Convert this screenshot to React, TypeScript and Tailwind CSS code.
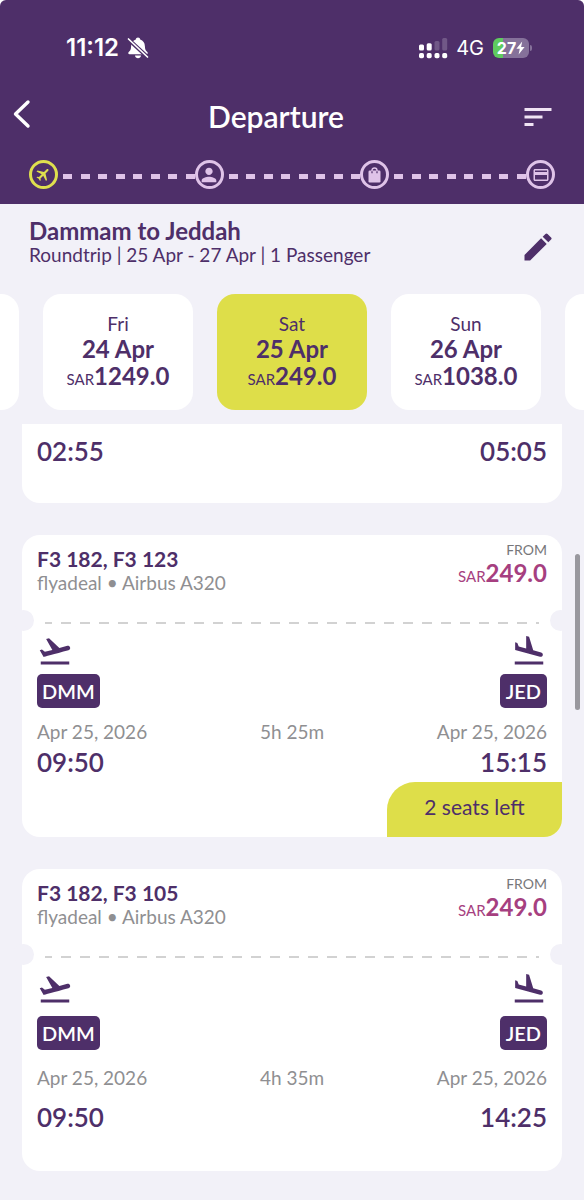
import React from "react";
import {
  MdCreditCard,
  MdEdit,
  MdFlight,
  MdFlightLand,
  MdFlightTakeoff,
  MdPerson,
  MdSort,
} from "react-icons/md";

type Flight = {
  numbers: string;
  carrier: string;
  price: string;
  duration: string;
  departs: string;
  arrives: string;
  seats?: string;
};

const flights: Flight[] = [
  {
    numbers: "F3 182, F3 123",
    carrier: "flyadeal • Airbus A320",
    price: "249.0",
    duration: "5h 25m",
    departs: "09:50",
    arrives: "15:15",
    seats: "2 seats left",
  },
  {
    numbers: "F3 182, F3 105",
    carrier: "flyadeal • Airbus A320",
    price: "249.0",
    duration: "4h 35m",
    departs: "09:50",
    arrives: "14:25",
  },
];

const days = [
  { day: "Fri", date: "24 Apr", price: "1249.0", selected: false },
  { day: "Sat", date: "25 Apr", price: "249.0", selected: true },
  { day: "Sun", date: "26 Apr", price: "1038.0", selected: false },
];

function StatusBar() {
  return (
    <div className="flex h-[32px] items-center justify-between pr-[52px] pl-[66px] font-['Inter',sans-serif]">
      <div className="flex items-center gap-2">
        <span className="text-[24px] leading-[30px] font-semibold">11:12</span>
        <svg width="22" height="22" viewBox="0 0 22 22" aria-label="Silent">
          <path
            d="M11 0.600C9.800 0.600 8.900 1.400 8.800 2.500C5.900 3.400 4.200 5.800 4.100 9.200C4 12.600 3.200 13.600 1.700 15C0.900 15.800 1.200 17.300 2.600 17.300H19.400C20.800 17.300 21.100 15.800 20.300 15C18.800 13.600 18 12.600 17.900 9.200C17.800 5.800 16.100 3.400 13.200 2.500C13.100 1.400 12.200 0.600 11 0.600Z"
            fill="#fff"
          />
          <path d="M8 18.500H14C13.800 20.200 12.600 21.200 11 21.200C9.400 21.200 8.200 20.200 8 18.500Z" fill="#fff" />
          <path d="M1 2L20.500 20" stroke="#4e2f69" strokeWidth="3.800" />
          <path d="M1.500 2L20.500 20" stroke="#fff" strokeWidth="1.700" strokeLinecap="round" />
        </svg>
      </div>
      <div className="flex items-center">
        <svg width="29" height="21" viewBox="0 0 29 21" fill="#fff" aria-label="Signal">
          <rect x="0" y="6.500" width="5" height="6" rx="1.500" />
          <rect x="7.700" y="5.200" width="5" height="7.300" rx="1.500" />
          <rect x="15.500" y="3" width="5" height="9.500" rx="1.500" opacity="0.200" />
          <rect x="23.200" y="0" width="5" height="12.500" rx="1.500" opacity="0.200" />
          <rect x="0" y="15" width="5" height="5.300" rx="1.700" />
          <rect x="7.700" y="15" width="5" height="5.300" rx="1.700" />
          <rect x="15.500" y="15" width="5" height="5.300" rx="1.700" />
          <rect x="23.200" y="15" width="5" height="5.300" rx="1.700" />
        </svg>
        <span className="ml-2 text-[20px] leading-[30px]">4G</span>
        <div className="ml-[9px] flex h-5 w-9 items-center justify-center rounded-[6px] bg-[linear-gradient(90deg,#5fcb5f_10px,#85719a_10px)]">
          <span className="text-[16px] leading-5 font-bold">27</span>
          <svg width="9" height="14" viewBox="0 0 9 14" fill="#fff" aria-hidden="true">
            <path d="M6.200 0.500L0.400 7.800H3.800L2.600 13.500L8.600 5.900H5.100Z" />
          </svg>
        </div>
        <span className="ml-px h-[6px] w-[2px] rounded-r-full bg-[#85719a]" />
      </div>
    </div>
  );
}

function Dashes() {
  return (
    <div className="ml-[5px] flex flex-1 justify-between pt-[3px]" aria-hidden="true">
      {Array.from({ length: 8 }, (_, i) => (
        <span key={i} className="h-[5px] w-[9px] bg-[#dfc3e8]" />
      ))}
    </div>
  );
}

function Step({ active, label, children }: { active?: boolean; label: string; children: React.ReactNode }) {
  return (
    <span
      role="img"
      aria-label={label}
      className={`flex size-[29px] items-center justify-center rounded-full border-[3px] ${
        active ? "border-[#dfdf4e] text-[#dfdf4e]" : "border-[#dfc3e8] text-[#dfc3e8]"
      }`}
    >
      {children}
    </span>
  );
}

function BagIcon() {
  return (
    <svg width="13" height="16" viewBox="0 0 13 16" aria-hidden="true">
      <rect x="0.500" y="3.500" width="12" height="12" rx="1.200" fill="currentColor" />
      <path d="M4 4V3.300C4 1.900 5 1 6.500 1S9 1.900 9 3.300V4" fill="none" stroke="currentColor" strokeWidth="1.400" />
      <path d="M4 4.300V6.300M9 4.300V6.300" stroke="#4e2f69" strokeWidth="1.200" />
    </svg>
  );
}

function Header() {
  return (
    <header className="h-[204px] rounded-t-[6px] bg-[#4e2f69] pt-8 text-white">
      <StatusBar />
      <div className="mt-[27px] grid h-[52px] grid-cols-[1fr_auto_1fr] items-center pr-[28px] pl-[12px]">
        <button type="button" aria-label="Back" className="justify-self-start pb-[6px]">
          <svg width="20" height="30" viewBox="0 0 20 30" fill="none" aria-hidden="true">
            <path d="M16 3L3.500 15L16 27" stroke="#fff" strokeWidth="3.400" strokeLinecap="round" strokeLinejoin="round" />
          </svg>
        </button>
        <h1 className="pr-4 pb-[2px] text-[30px] leading-9 font-semibold">Departure</h1>
        <button type="button" aria-label="Sort" className="justify-self-end text-[#f0e4f4]">
          <MdSort size={36} />
        </button>
      </div>
      <div className="mt-[17px] flex items-center px-[29px]">
        <Step active label="Flight">
          <MdFlight size={17} className="rotate-45" />
        </Step>
        <Dashes />
        <Step label="Passengers">
          <MdPerson size={22} />
        </Step>
        <Dashes />
        <Step label="Extras">
          <BagIcon />
        </Step>
        <Dashes />
        <Step label="Payment">
          <MdCreditCard size={18} />
        </Step>
      </div>
    </header>
  );
}

function Price({ amount }: { amount: string }) {
  return (
    <span className="flex items-baseline">
      <span className="text-[15px] leading-6 font-normal">SAR</span>
      <span className="text-[24px] leading-6 font-bold">{amount}</span>
    </span>
  );
}

function Days() {
  return (
    <div className="flex justify-center gap-6 overflow-hidden">
      <span className="h-[116px] w-[150px] shrink-0 rounded-[18px] bg-white" />
      {days.map((d) => (
        <button
          type="button"
          key={d.date}
          aria-pressed={d.selected}
          className={`flex h-[116px] w-[150px] shrink-0 flex-col items-center rounded-[18px] pt-[18px] ${
            d.selected ? "bg-[#dede49]" : "bg-white"
          }`}
        >
          <span className="text-[19px] leading-6">{d.day}</span>
          <span className="mb-[2px] text-[24px] leading-[26px] font-bold">{d.date}</span>
          <Price amount={d.price} />
        </button>
      ))}
      <span className="h-[116px] w-[150px] shrink-0 rounded-[18px] bg-white" />
    </div>
  );
}

function Times({ departs, arrives }: { departs: string; arrives: string }) {
  return (
    <div className="flex justify-between px-[15px] text-[26px] leading-[30px] font-semibold">
      <span>{departs}</span>
      <span>{arrives}</span>
    </div>
  );
}

function FlightCard({ flight }: { flight: Flight }) {
  const tight = Boolean(flight.seats);
  return (
    <article className="relative flex min-h-[302px] flex-col rounded-[18px] bg-white">
      <div className="flex h-[87px] justify-between px-[15px] pt-[7px]">
        <div className="pt-[5px]">
          <h2 className="text-[21px] leading-6 font-bold">{flight.numbers}</h2>
          <p className="text-[19px] leading-6 text-[#8f8f92]">{flight.carrier}</p>
        </div>
        <div className="flex flex-col items-end gap-[3px]">
          <span className="text-[14px] leading-4 text-[#77777a]">FROM</span>
          <span className="text-[#a63f80]">
            <Price amount={flight.price} />
          </span>
        </div>
      </div>
      <span className="absolute top-[75px] -left-[9px] size-[21px] rounded-full bg-[#f2f1f8]" />
      <span className="absolute top-[75px] -right-[9px] size-[21px] rounded-full bg-[#f2f1f8]" />
      <div className="mx-[23px] h-[2px] bg-[linear-gradient(90deg,#d2d2d2_10px,transparent_10px)] bg-[length:19px_2px] bg-[position:-3px_0] bg-repeat-x" />
      <div className={`flex justify-between px-[15px] ${tight ? "mt-[9px]" : "mt-[13px]"}`}>
        <MdFlightTakeoff size={36} />
        <MdFlightLand size={36} />
      </div>
      <div
        className={`flex justify-between px-[15px] text-[20px] leading-[34px] font-semibold text-white ${
          tight ? "mt-[5px]" : "mt-[9px]"
        }`}
      >
        <span className="rounded-[5px] bg-[#4e2f69] px-[5px]">DMM</span>
        <span className="rounded-[5px] bg-[#4e2f69] px-[6px]">JED</span>
      </div>
      <div
        className={`grid grid-cols-[1fr_auto_1fr] px-[15px] text-[19px] leading-6 text-[#8f8f92] ${
          tight ? "mt-3" : "mt-4"
        }`}
      >
        <span>Apr 25, 2026</span>
        <span>{flight.duration}</span>
        <span className="text-right">Apr 25, 2026</span>
      </div>
      <div className={tight ? "mt-[3px]" : "mt-3"}>
        <Times departs={flight.departs} arrives={flight.arrives} />
      </div>
      {flight.seats && (
        <div className="mt-auto flex h-[55px] w-[175px] items-center justify-center self-end rounded-tl-[28px] rounded-br-[18px] bg-[#dede49] pb-[6px] text-[21px] leading-6">
          {flight.seats}
        </div>
      )}
    </article>
  );
}

export default function App() {
  return (
    <div className="relative min-h-screen bg-white font-['Lato',sans-serif] text-[#4e2f69]">
      <Header />
      <main className="min-h-[996px] bg-[#f2f1f8]">
        <div className="flex items-center justify-between pt-[15px] pr-[28px] pl-[29px]">
          <div>
            <h2 className="text-[24px] leading-6 font-bold">Dammam to Jeddah</h2>
            <p className="text-[19px] leading-6">Roundtrip | 25 Apr - 27 Apr | 1 Passenger</p>
          </div>
          <button type="button" aria-label="Edit search" className="pt-[7px]">
            <MdEdit size={36} />
          </button>
        </div>
        <div className="mt-[27px]">
          <Days />
        </div>
        <div className="mt-[14px] flex flex-col gap-8 px-[22px]">
          <article className="h-[79px] rounded-b-[18px] bg-white pt-[12px]">
            <Times departs="02:55" arrives="05:05" />
          </article>
          {flights.map((f) => (
            <FlightCard key={f.numbers} flight={f} />
          ))}
        </div>
      </main>
      <span className="absolute top-[554px] right-[4px] h-[156px] w-[5px] rounded-full bg-[#99989e]" />
    </div>
  );
}
